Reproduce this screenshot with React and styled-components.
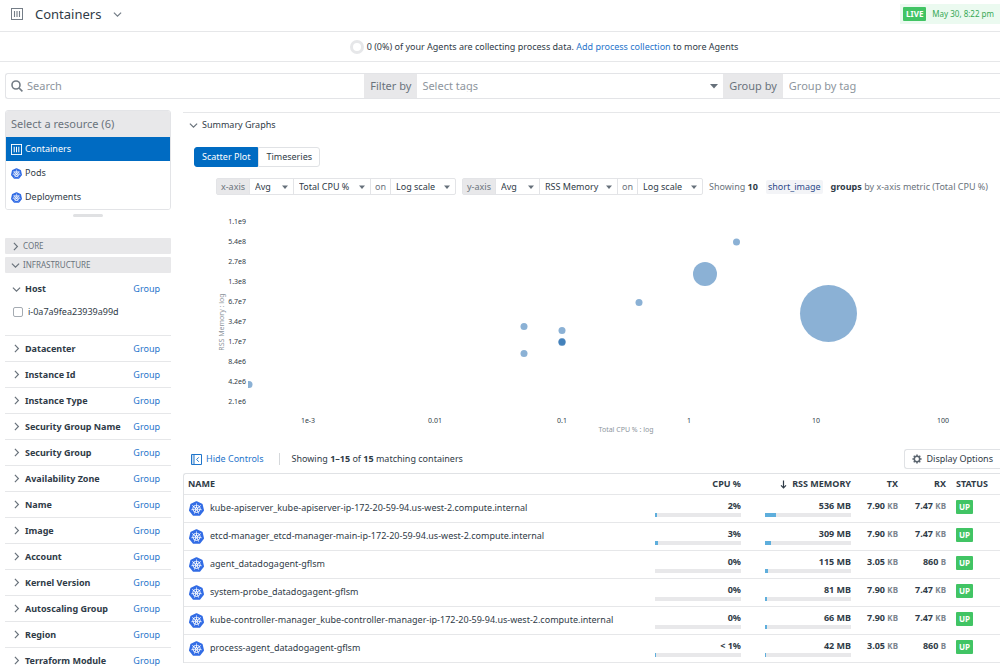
import React from "react";
import styled, {createGlobalStyle, css} from "styled-components";
import {SiKubernetes} from "react-icons/si";

const GlobalStyle = createGlobalStyle`
    * {
        box-sizing: border-box;
    }

    body {
        margin: 0;
        overflow: hidden;
        background: #fff;
        color: #2f3b47;
        font-family: "Noto Sans", sans-serif;
        font-size: 9px;
        line-height: 12px;
    }

    button, input, select {
        margin: 0;
        padding: 0;
        border: 0;
        background: none;
        color: inherit;
        font: inherit;
    }

    a {
        color: #1f75cb;
        text-decoration: none;
    }

    svg {
        display: block;
        flex-shrink: 0;
    }
`;

const Page = styled.div`
    height: 100vh;
    overflow: hidden;
`;

const Header = styled.header`
    display: flex;
    align-items: center;
    justify-content: space-between;
    height: 32px;
    padding: 0 0 3px 11px;
    border-bottom: 1px solid #e6e7e9;
`;

const TitleButton = styled.button`
    display: flex;
    align-items: center;
    gap: 12px;
    color: #747d87;
`;

const Title = styled.h1`
    margin: 0;
    color: #2f3b47;
    font-size: 13px;
    font-weight: 400;
    line-height: 18px;
`;

const LiveTime = styled.div`
    display: flex;
    align-items: center;
    gap: 6px;
    height: 20px;
    padding: 0 6px 0 3px;
    background: #ebfaf0;
    color: #35a854;
    font-size: 8px;
`;

const Badge = styled.span`
    display: inline-block;
    padding: 0 3px;
    border-radius: 1px;
    background: #41c464;
    color: #fff;
    font-size: 8px;
    font-weight: 700;
    line-height: 14px;
`;

const Banner = styled.div`
    display: flex;
    align-items: center;
    justify-content: center;
    gap: 3px;
    height: 30px;
    padding-left: 88px;
    border-bottom: 1px solid #e6e7e9;
`;

const Ring = styled.span`
    width: 14px;
    height: 14px;
    border: 3px solid #e6e7e9;
    border-radius: 50%;
`;

const FilterBar = styled.div`
    display: flex;
    height: 26px;
    margin: 11px 0 11px 5px;
    border: 1px solid #e3e4e7;
    border-right: 0;
    border-radius: 3px 0 0 3px;
    color: #8d959d;
    font-size: 11px;
`;

const SearchBox = styled.label`
    display: flex;
    align-items: center;
    flex: 358;
    gap: 4px;
    padding-left: 5px;
`;

const TextInput = styled.input`
    min-width: 0;
    flex: ${({$grow}) => $grow || 1};
    outline: 0;

    &::placeholder {
        color: #8d959d;
        opacity: 1;
    }
`;

const TagInput = styled(TextInput)`
    padding-left: 6px;
`;

const BarLabel = styled.label`
    padding: 0 6px;
    background: #e8e8ea;
    color: #6a737c;
    line-height: 24px;
`;

const SelectWrap = styled.span`
    display: inline-grid;
    align-items: center;
    width: ${({$width}) => ($width ? `${$width}px` : "auto")};
    flex: ${({$grow}) => $grow || "none"};

    & > * {
        grid-area: 1 / 1;
    }

    & > svg {
        justify-self: end;
        margin-right: 5px;
        pointer-events: none;
    }
`;

const SelectField = styled.select`
    width: 100%;
    height: 100%;
    padding-left: 5px;
    appearance: none;
`;

const Body = styled.div`
    display: flex;
    align-items: flex-start;
    gap: 12px;
    padding-left: 5px;
`;

const Sidebar = styled.aside`
    width: 166px;
    flex-shrink: 0;
`;

const ResourceBox = styled.nav`
    overflow: hidden;
    border: 1px solid #e3e4e7;
    border-radius: 3px;
`;

const ResourceTitle = styled.h2`
    margin: 0;
    padding: 0 5px;
    background: #e8e8ea;
    color: #6a737c;
    font-size: 11px;
    font-weight: 400;
    line-height: 26px;
`;

const ResourceLink = styled.a`
    display: flex;
    align-items: center;
    gap: 3px;
    height: 24px;
    padding: 0 5px;
    background: ${({$active}) => ($active ? "#006bc2" : "#fff")};
    color: ${({$active}) => ($active ? "#fff" : "#2f3b47")};
`;

const Handle = styled.div`
    width: 30px;
    height: 3px;
    margin: 4px auto 21px;
    border-radius: 2px;
    background: #e0e1e3;
`;

const SectionButton = styled.button`
    display: flex;
    align-items: center;
    gap: 3px;
    width: 100%;
    height: 16px;
    margin-bottom: 3px;
    padding-left: 6px;
    border-radius: 1px;
    background: #e8e8ea;
    color: #6a737c;
    font-size: 8px;
`;

const FacetRow = styled.div`
    display: flex;
    align-items: center;
    justify-content: space-between;
    height: 26px;
    padding: 0 11px 0 7px;
    border-bottom: ${({$open}) => ($open ? 0 : "1px solid #e6e7e9")};
`;

const FacetToggle = styled.button`
    display: flex;
    align-items: center;
    gap: 4px;
    font-weight: 700;

    svg {
        color: #6a737c;
    }
`;

const FacetBody = styled.div`
    height: 34px;
    padding: 4px 8px 0;
    border-bottom: 1px solid #e6e7e9;
`;

const CheckLabel = styled.label`
    display: flex;
    align-items: center;
    gap: 5px;
`;

const Checkbox = styled.input`
    width: 10px;
    height: 10px;
    border: 1px solid #a5abb2;
    border-radius: 2px;
    background: #fff;
    appearance: none;
`;

const Main = styled.main`
    flex: 1;
    min-width: 0;
    margin-top: 2px;
    border-top: 1px solid #e6e7e9;
`;

const SummaryToggle = styled.button`
    display: flex;
    align-items: center;
    gap: 4px;
    padding: 6px 6px;

    svg {
        color: #6a737c;
    }
`;

const Tabs = styled.div`
    display: flex;
    margin: 10px 0 11px 11px;
`;

const Tab = styled.button`
    height: 20px;
    padding: 0 7px;
    border: 1px solid #e0e2e5;
    border-radius: 0 3px 3px 0;

    ${({$active}) => $active && css`
        border-color: #006bc2;
        border-radius: 3px 0 0 3px;
        background: #006bc2;
        color: #fff;
    `}
`;

const AxisRow = styled.div`
    display: flex;
    align-items: center;
    gap: 6px;
    padding-left: 33px;
    white-space: nowrap;
`;

const AxisGroup = styled.div`
    display: flex;
    height: 17px;
    border: 1px solid #e3e4e7;
    border-radius: 2px;

    & > * + * {
        border-left: 1px solid #e3e4e7;
    }
`;

const AxisLabel = styled.span`
    width: ${({$narrow}) => ($narrow ? 20 : 32)}px;
    background: ${({$narrow}) => ($narrow ? "#fff" : "#e8e8ea")};
    color: #6a737c;
    line-height: 15px;
    text-align: center;
`;

const AxisSummary = styled.p`
    display: flex;
    align-items: center;
    gap: 5px;
    margin: 0;
    color: #6a737c;

    b {
        color: #2f3b47;
    }
`;

const Chip = styled.span`
    margin: 0 3px;
    padding: 0 2px;
    border-radius: 2px;
    background: #f3f4f7;
    color: #2c4b8a;
    line-height: 14px;
`;

const Chart = styled.svg`
    width: 100%;
    fill: #2f3b47;
    font-size: 7px;
`;

const ListBar = styled.div`
    display: flex;
    align-items: center;
    height: 20px;
    margin-bottom: 4px;
    padding-left: 8px;
`;

const LinkButton = styled.button`
    display: flex;
    align-items: center;
    gap: 4px;
    color: #1f75cb;
`;

const Matching = styled.p`
    margin: 0 auto 0 15px;
    padding-left: 12px;
    border-left: 1px solid #d5d8db;
`;

const OptionsButton = styled.button`
    display: flex;
    align-items: center;
    gap: 5px;
    height: 20px;
    padding: 0 7px 0 7px;
    border: 1px solid #e0e2e5;
    border-right: 0;
    border-radius: 3px 0 0 3px;
`;

const Table = styled.table`
    width: 100%;
    border: 1px solid #e0e2e5;
    border-width: 1px 0 0 1px;
    border-radius: 3px 0 0 0;
    border-spacing: 0;
    table-layout: fixed;
`;

const Th = styled.th`
    width: ${({$width}) => ($width ? `${$width}px` : "auto")};
    height: 21px;
    padding: 0 0 0 ${({$pad}) => $pad || 0}px;
    border-bottom: 1px solid #e6e7e9;
    text-align: ${({$right}) => ($right ? "right" : "left")};
    white-space: nowrap;

    svg {
        display: inline-block;
        margin-right: 3px;
        vertical-align: middle;
    }
`;

const Td = styled.td`
    height: 28px;
    padding: 5px 0 0 ${({$pad}) => $pad || 0}px;
    border-bottom: 1px solid #e6e7e9;
    font-weight: ${({$right}) => ($right ? 700 : 400)};
    text-align: ${({$right}) => ($right ? "right" : "left")};
    vertical-align: top;
    white-space: nowrap;

    small {
        color: #7b848d;
        font-size: 8px;
    }
`;

const ContainerName = styled.div`
    display: flex;
    align-items: center;
    gap: 6px;
    height: 16px;

    svg {
        color: #326ce5;
    }
`;

const Meter = styled.div`
    height: 4px;
    margin-top: 1px;
    background: #e8e8ea;
`;

const MeterFill = styled.div`
    height: 100%;
    background: #5eaedc;
`;

const Chevron = ({open, size = 9}) => (
    <svg width={size} height={size} viewBox="0 0 9 9" fill="none" stroke="currentColor" strokeWidth="1.2">
        <path d={open ? "M.9 2.6 4.5 6.2 8.1 2.6" : "M2.9.9 6.4 4.5 2.9 8.1"}/>
    </svg>
);

const Caret = ({size = 6}) => (
    <svg width={size} height={size} viewBox="0 0 8 8" fill="#66707a">
        <path d="M0 2h8L4 6.5z"/>
    </svg>
);

const ContainerIcon = ({size}) => (
    <svg width={size} height={size} viewBox="0 0 12 12" fill="none" stroke="currentColor">
        <rect x=".5" y=".5" width="11" height="11"/>
        <path d="M3.5 3v6M6 3v6M8.5 3v6" strokeWidth="1.1"/>
    </svg>
);

const SearchIcon = () => (
    <svg width="12" height="12" viewBox="0 0 12 12" fill="none" stroke="#737c85" strokeWidth="1.6">
        <circle cx="5" cy="5" r="4"/>
        <path d="m8 8 3.4 3.4"/>
    </svg>
);

const PanelIcon = () => (
    <svg width="11" height="11" viewBox="0 0 11 11" fill="none" stroke="currentColor">
        <path d="M.5.5h10v10H.5zM3 .5v10"/>
        <path d="M7.8 3.3 5.6 5.5l2.2 2.2"/>
        <path d="M1.8 1v9" strokeOpacity=".35"/>
    </svg>
);

const GearIcon = () => (
    <svg width="10" height="10" viewBox="0 0 10 10" fill="none" stroke="#5c6670">
        <circle cx="5" cy="5" r="2.7" strokeWidth="1.5"/>
        {[0, 45, 90, 135].map((angle) => (
            <path key={angle} d="M5 .4v1.8M5 7.8v1.8" strokeWidth="1.5" transform={`rotate(${angle} 5 5)`}/>
        ))}
    </svg>
);

const ArrowDown = () => (
    <svg width="7" height="9" viewBox="0 0 7 9" fill="none" stroke="currentColor" strokeWidth="1.2">
        <path d="M3.5.5v7.3M1 5.4l2.5 2.5L6 5.4"/>
    </svg>
);

const Select = ({label, id, value, width, grow, caret}) => (
    <SelectWrap $width={width} $grow={grow}>
        <SelectField id={id} aria-label={label}>
            <option>{value}</option>
        </SelectField>
        <Caret size={caret}/>
    </SelectWrap>
);

const facets = [
    "Datacenter", "Instance Id", "Instance Type", "Security Group Name", "Security Group",
    "Availability Zone", "Name", "Image", "Account", "Kernel Version", "Autoscaling Group",
    "Region", "Terraform Module",
];

const containers = [
    {name: "kube-apiserver_kube-apiserver-ip-172-20-59-94.us-west-2.compute.internal", cpu: "2%", cpuFill: 2, rss: 536, rssFill: 13, tx: ["7.90", "KB"], rx: ["7.47", "KB"]},
    {name: "etcd-manager_etcd-manager-main-ip-172-20-59-94.us-west-2.compute.internal", cpu: "3%", cpuFill: 3, rss: 309, rssFill: 7, tx: ["7.90", "KB"], rx: ["7.47", "KB"]},
    {name: "agent_datadogagent-gflsm", cpu: "0%", cpuFill: 0, rss: 115, rssFill: 3, tx: ["3.05", "KB"], rx: ["860", "B"]},
    {name: "system-probe_datadogagent-gflsm", cpu: "0%", cpuFill: 0, rss: 81, rssFill: 2, tx: ["7.90", "KB"], rx: ["7.47", "KB"]},
    {name: "kube-controller-manager_kube-controller-manager-ip-172-20-59-94.us-west-2.compute.internal", cpu: "0%", cpuFill: 0, rss: 66, rssFill: 2, tx: ["7.90", "KB"], rx: ["7.47", "KB"]},
    {name: "process-agent_datadogagent-gflsm", cpu: "< 1%", cpuFill: 1, rss: 42, rssFill: 1, tx: ["3.05", "KB"], rx: ["860", "B"]},
];

const yTicks = ["1.1e9", "5.4e8", "2.7e8", "1.3e8", "6.7e7", "3.4e7", "1.7e7", "8.4e6", "4.2e6", "2.1e6"];
const xTicks = ["1e-3", "0.01", "0.1", "1", "10", "100"];

const points = [
    [66, 189.5, 3.5], [341, 131.5, 3.5], [341, 158.5, 3.5], [379, 135.5, 3.5], [379, 146.5, 3.5],
    [379, 147, 3.5], [379, 147.5, 3.5], [456, 107.5, 3.5], [553.5, 47, 3.5], [522, 79, 12],
    [645.5, 118.5, 28.5],
];

const ScatterPlot = () => (
    <Chart viewBox="0 0 817 254" role="img" aria-label="RSS Memory by Total CPU %">
        <clipPath id="plot">
            <rect x="65" y="0" width="752" height="220"/>
        </clipPath>
        {yTicks.map((tick, i) => (
            <text key={tick} x="63" y={29 + i * 20} textAnchor="end">{tick}</text>
        ))}
        {xTicks.map((tick, i) => (
            <text key={tick} x={125 + i * 127} y="228" textAnchor="middle">{tick}</text>
        ))}
        <text x="443" y="237" textAnchor="middle" fill="#8d959d">Total CPU % : log</text>
        <text transform="translate(41 127) rotate(-90)" textAnchor="middle" fill="#8d959d">RSS Memory : log</text>
        <g clipPath="url(#plot)" fill="#3375b5" fillOpacity=".57">
            {points.map(([x, y, r]) => (
                <circle key={`${x}-${y}`} cx={x} cy={y} r={r}/>
            ))}
        </g>
    </Chart>
);

const AxisControls = ({axis, metric, metricWidth}) => (
    <AxisGroup>
        <AxisLabel>{axis}</AxisLabel>
        <Select label={`${axis} aggregation`} value="Avg" width={44}/>
        <Select label={`${axis} metric`} value={metric} width={metricWidth}/>
        <AxisLabel $narrow>on</AxisLabel>
        <Select label={`${axis} scale`} value="Log scale" width={65}/>
    </AxisGroup>
);

const Facets = () => (
    <>
        <SectionButton><Chevron/>CORE</SectionButton>
        <SectionButton><Chevron open/>INFRASTRUCTURE</SectionButton>
        <FacetRow $open>
            <FacetToggle><Chevron open/>Host</FacetToggle>
            <a href="#host">Group</a>
        </FacetRow>
        <FacetBody>
            <CheckLabel>
                <Checkbox type="checkbox"/>
                i-0a7a9fea23939a99d
            </CheckLabel>
        </FacetBody>
        {facets.map((facet) => (
            <FacetRow key={facet}>
                <FacetToggle><Chevron/>{facet}</FacetToggle>
                <a href="#group">Group</a>
            </FacetRow>
        ))}
    </>
);

const ContainerTable = () => (
    <Table>
        <thead>
            <tr>
                <Th $pad={4}>NAME</Th>
                <Th $right $width={110}>CPU %</Th>
                <Th $right $width={110}><ArrowDown/> RSS MEMORY</Th>
                <Th $right $width={47}>TX</Th>
                <Th $right $width={48}>RX</Th>
                <Th $width={54} $pad={10}>STATUS</Th>
            </tr>
        </thead>
        <tbody>
            {containers.map((row) => (
                <tr key={row.name}>
                    <Td $pad={5}>
                        <ContainerName><SiKubernetes size={15}/>{row.name}</ContainerName>
                    </Td>
                    <Td $right $pad={24}>
                        {row.cpu}
                        <Meter><MeterFill style={{width: `${row.cpuFill}%`}}/></Meter>
                    </Td>
                    <Td $right $pad={24}>
                        {row.rss} MB
                        <Meter><MeterFill style={{width: `${row.rssFill}%`}}/></Meter>
                    </Td>
                    <Td $right>{row.tx[0]} <small>{row.tx[1]}</small></Td>
                    <Td $right>{row.rx[0]} <small>{row.rx[1]}</small></Td>
                    <Td $pad={10}><Badge>UP</Badge></Td>
                </tr>
            ))}
        </tbody>
    </Table>
);

const App = () => (
    <Page>
        <GlobalStyle/>
        <Header>
            <TitleButton>
                <ContainerIcon size={12}/>
                <Title>Containers</Title>
                <Chevron open/>
            </TitleButton>
            <LiveTime><Badge>LIVE</Badge>May 30, 8:22 pm</LiveTime>
        </Header>
        <Banner>
            <Ring/>
            <span>
                0 (0%) of your Agents are collecting process data. <a href="#agents">Add process collection</a> to more Agents
            </span>
        </Banner>
        <FilterBar>
            <SearchBox>
                <SearchIcon/>
                <TextInput type="search" placeholder="Search" aria-label="Search"/>
            </SearchBox>
            <BarLabel htmlFor="filter-by">Filter by</BarLabel>
            <Select id="filter-by" value="Select tags" grow={310} caret={8}/>
            <BarLabel htmlFor="group-by">Group by</BarLabel>
            <TagInput id="group-by" placeholder="Group by tag" $grow={214}/>
        </FilterBar>
        <Body>
            <Sidebar>
                <ResourceBox>
                    <ResourceTitle>Select a resource (6)</ResourceTitle>
                    <ResourceLink href="#containers" $active><ContainerIcon size={11}/>Containers</ResourceLink>
                    <ResourceLink href="#pods"><SiKubernetes size={11} color="#326ce5"/>Pods</ResourceLink>
                    <ResourceLink href="#deployments"><SiKubernetes size={11} color="#326ce5"/>Deployments</ResourceLink>
                </ResourceBox>
                <Handle/>
                <Facets/>
            </Sidebar>
            <Main>
                <SummaryToggle><Chevron open/>Summary Graphs</SummaryToggle>
                <Tabs>
                    <Tab $active>Scatter Plot</Tab>
                    <Tab>Timeseries</Tab>
                </Tabs>
                <AxisRow>
                    <AxisControls axis="x-axis" metric="Total CPU %" metricWidth={77}/>
                    <AxisControls axis="y-axis" metric="RSS Memory" metricWidth={78}/>
                    <AxisSummary>
                        <span>Showing <b>10</b></span>
                        <Chip>short_image</Chip>
                        <span><b>groups</b> by x-axis metric (Total CPU %)</span>
                    </AxisSummary>
                </AxisRow>
                <ScatterPlot/>
                <ListBar>
                    <LinkButton><PanelIcon/>Hide Controls</LinkButton>
                    <Matching>Showing <b>1–15</b> of <b>15</b> matching containers</Matching>
                    <OptionsButton><GearIcon/>Display Options</OptionsButton>
                </ListBar>
                <ContainerTable/>
            </Main>
        </Body>
    </Page>
);

export default App;
